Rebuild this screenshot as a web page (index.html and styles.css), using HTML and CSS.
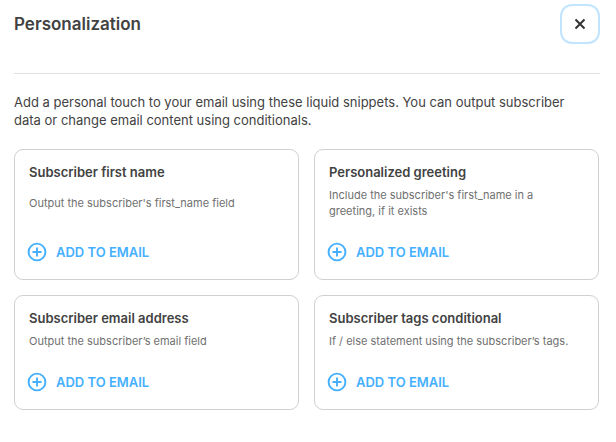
FILE: index.html
```html
<!DOCTYPE html>
<html lang="en">
  <head>
    <meta charset="UTF-8" />
    <meta name="viewport" content="width=device-width, initial-scale=1.0" />
    <title>Personalization</title>
    <link rel="stylesheet" href="styles.css">
  </head>
  <body>
    <!-- Shared icon for the add buttons -->
    <svg class="icon-defs" aria-hidden="true">
      <symbol id="plus-circle" viewBox="0 0 20 20">
        <circle cx="10" cy="10" r="8.4" />
        <path d="M10 6.2v7.6M6.2 10h7.6" />
      </symbol>
    </svg>

    <main class="panel">
      <header class="panel-header">
        <h1>Personalization</h1>
        <button type="button" class="close-button" aria-label="Close">
          <svg viewBox="0 0 12 12"><path d="M1.5 1.5l9 9M10.5 1.5l-9 9" /></svg>
        </button>
      </header>

      <p class="intro">Add a personal touch to your email using these liquid snippets. You can output subscriber data or change email content using conditionals.</p>

      <div class="snippets">
        <section class="card">
          <h2>Subscriber first name</h2>
          <p>Output the subscriber's first_name field</p>
          <button type="button" class="add-button"><svg><use href="#plus-circle" /></svg>ADD TO EMAIL</button>
        </section>

        <section class="card">
          <h2>Personalized greeting</h2>
          <p>Include the subscriber's first_name in a greeting, if it exists</p>
          <button type="button" class="add-button"><svg><use href="#plus-circle" /></svg>ADD TO EMAIL</button>
        </section>

        <section class="card">
          <h2>Subscriber email address</h2>
          <p>Output the subscriber’s email field</p>
          <button type="button" class="add-button"><svg><use href="#plus-circle" /></svg>ADD TO EMAIL</button>
        </section>

        <section class="card">
          <h2>Subscriber tags conditional</h2>
          <p>If / else statement using the subscriber’s tags.</p>
          <button type="button" class="add-button"><svg><use href="#plus-circle" /></svg>ADD TO EMAIL</button>
        </section>
      </div>
    </main>
  </body>
</html>
```

FILE: styles.css
```css
* {
  box-sizing: border-box;
}
body {
  margin: 0;
  background-color: #fff;
  color: #424242;
  font-family: Inter, sans-serif;
}
h1, h2, p {
  margin: 0;
}
.icon-defs {
  display: none;
}
.panel {
  padding: 4px 16px 32px 14px;
}
.panel-header {
  display: flex;
  justify-content: space-between;
  align-items: center;
  padding-bottom: 29px;
  border-bottom: 1px solid #e0e0e0;
}
h1 {
  font-size: 17px;
  line-height: 24px;
  font-weight: 600;
}
.close-button {
  display: flex;
  align-items: center;
  justify-content: center;
  width: 40px;
  height: 40px;
  padding: 0;
  background-color: #fff;
  border: 2px solid #c2e5ff;
  border-radius: 12px;
  cursor: pointer;
}
.close-button svg {
  width: 12px;
  height: 12px;
  fill: none;
  stroke: #333;
  stroke-width: 2;
}
.intro {
  margin: 19px 0 20px;
  padding-right: 14px;
  font-size: 13px;
  line-height: 18px;
}
.snippets {
  display: grid;
  grid-template-columns: 1fr 1fr;
  gap: 15px;
  padding-right: 1px;
}
.card {
  display: flex;
  flex-direction: column;
  align-items: flex-start;
  padding: 13px 14px 17px;
  border: 1px solid #d0d0d0;
  border-radius: 9px;
}
.card h2 {
  font-size: 13px;
  line-height: 18px;
  font-weight: 600;
}
.card p {
  margin: auto 0;
  padding: 6px 10px 6px 0;
  color: #707070;
  font-size: 11px;
  line-height: 16px;
}
.add-button {
  display: flex;
  align-items: center;
  gap: 9px;
  margin: 17px 0 0 -2px;
  padding: 0;
  background: none;
  border: none;
  color: #45b0ff;
  font-family: inherit;
  font-size: 13px;
  line-height: 20px;
  font-weight: 600;
  cursor: pointer;
}
.add-button svg {
  width: 20px;
  height: 20px;
  fill: none;
  stroke: currentColor;
  stroke-width: 1.9;
  stroke-linecap: round;
}
```
